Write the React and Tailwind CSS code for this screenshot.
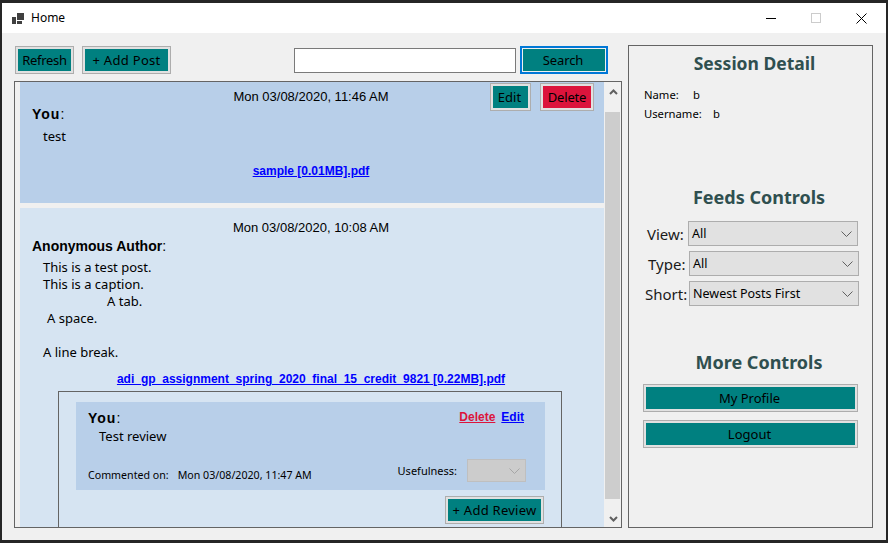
const sans = "font-['Noto_Sans',sans-serif]";
const arial = "font-['Liberation_Sans',Arial,sans-serif]";

function Btn({ children, className = '', fill = 'bg-[#008080]' }) {
  return (
    <button type="button" className={`h-[28px] border border-[#adadad] bg-[#e1e1e1] p-[2px] text-[13px] leading-none text-black ${className}`}>
      <span className={`flex h-full w-full items-center justify-center ${fill}`}>{children}</span>
    </button>
  );
}

function Chevron({ color = '#606060' }) {
  return (
    <svg width="11" height="6" viewBox="0 0 11 6" fill="none" stroke={color} strokeWidth="1">
      <path d="M0.5 0.5L5.5 5.5L10.5 0.5" />
    </svg>
  );
}

function Combo({ label, value, labelClass = '' }) {
  return (
    <div className="flex h-[25px] items-center">
      <span className={`pt-[1px] text-[15px] leading-none text-[#1a1a1a] ${labelClass}`}>{label}</span>
      <div className="flex h-[25px] w-[170px] items-center justify-between border border-[#adadad] bg-[#e1e1e1] pl-[3px] pr-[3px] text-[12.5px]">
        <span className="pt-[2px]">{value}</span>
        <span className="mr-[1px] flex w-[14px] justify-center"><Chevron /></span>
      </div>
    </div>
  );
}

function Heading({ children, className = '' }) {
  return <h2 className={`text-center text-[18px] font-bold leading-[24px] text-[#2f4f4f] ${className}`}>{children}</h2>;
}

function Link({ children, className = '' }) {
  return <a className={`${arial} text-[12px] font-bold leading-[14px] text-[#0000ff] underline ${className}`}>{children}</a>;
}

export default function App() {
  return (
    <div className={`${sans} flex h-[543px] w-[888px] flex-col border-x-2 border-y-[3px] border-[#262626] bg-[#f0f0f0] text-black`}>
      {/* title bar */}
      <header className="flex h-[30px] shrink-0 items-center justify-between bg-white pl-[10px] pr-[19px]">
        <div className="flex items-center gap-[7px]">
          <svg width="12" height="11" viewBox="0 0 12 11" fill="#404040">
            <rect x="0" y="4" width="4" height="7" />
            <rect x="5" y="0" width="7" height="7" />
            <rect x="5" y="8" width="5" height="3" />
          </svg>
          <span className="text-[12px] leading-none">Home</span>
        </div>
        <div className="flex items-center gap-[35px]">
          <svg width="10" height="10" viewBox="0 0 10 10" stroke="#000"><path d="M0 5.5H10" /></svg>
          <svg width="10" height="10" viewBox="0 0 10 10" fill="none" stroke="#cccccc"><rect x="0.5" y="0.5" width="9" height="9" /></svg>
          <svg width="11" height="11" viewBox="0 0 11 11" fill="none" stroke="#000"><path d="M0.5 0.5L10.5 10.5M10.5 0.5L0.5 10.5" /></svg>
        </div>
      </header>

      <div className="flex min-h-0 flex-1 pl-[12px] pr-[13px] pt-[12px]">
        {/* feed column */}
        <main className="flex w-[608px] flex-col">
          <div className="flex h-[36px] shrink-0 items-start pl-[1px]">
            <Btn className="mt-[1px] w-[59px] tracking-[-0.3px]">Refresh</Btn>
            <Btn className="ml-[8px] mt-[1px] w-[89px] tracking-[0.3px]">+ Add Post</Btn>
            <div className="ml-[123px] mt-[3px] h-[25px] w-[222px] border border-[#7a7a7a] bg-white" />
            <button type="button" className="ml-[4px] mt-[1px] h-[28px] w-[88px] border-2 border-[#0078d7] p-[1px] text-[13px] leading-none tracking-[-0.1px]">
              <span className="flex h-full w-full items-center justify-center bg-[#008080] pr-[2px]">Search</span>
            </button>
          </div>

          <div className="flex h-[447px] overflow-hidden border border-[#646464] bg-[#f0f0f0]">
            <div className="flex w-[590px] flex-col gap-[5px] pl-[5px] pr-[1px]">
              {/* first post */}
              <section className="h-[121px] shrink-0 bg-[#b8cfe9] pl-[12px] pr-[10px] pt-[1px]">
                <div className="grid h-[40px] grid-cols-[1fr_auto_1fr]">
                  <b className={`${arial} self-end text-[14px] leading-[17px] tracking-[1px]`}>You<span className="font-normal">:</span></b>
                  <span className={`${arial} -ml-[4px] mt-[6px] text-[13px] leading-[16px]`}>Mon 03/08/2020, 11:46 AM</span>
                  <div className="flex justify-end gap-[9px]">
                    <Btn className="w-[41px]"><span className="mr-[2px]">Edit</span></Btn>
                    <Btn fill="bg-[#dc143c]" className="w-[54px] tracking-[-0.2px]">Delete</Btn>
                  </div>
                </div>
                <p className="mt-[5px] pl-[11px] text-[13px] leading-[17px]">test</p>
                <div className="mt-[17px] pr-[4px] text-center leading-[14px]"><Link>sample [0.01MB].pdf</Link></div>
              </section>

              {/* second post */}
              <section className="flex-1 bg-[#d6e4f2] pl-[12px] pt-[12px]">
                <div className={`${arial} pr-[14px] text-center text-[13px] leading-[16px]`}>Mon 03/08/2020, 10:08 AM</div>
                <b className={`${arial} mt-[2px] block text-[14px] leading-[17px]`}>Anonymous Author<span className="font-normal">:</span></b>
                <div className="mt-[4px] pl-[11px] text-[13px] leading-[17px]">
                  <p>This is a test post.</p>
                  <p>This is a caption.</p>
                  <p className="pl-[64px]">A tab.</p>
                  <p className="pl-[4px]">A space.</p>
                  <p className="h-[17px]" />
                  <p>A line break.</p>
                </div>
                <div className="mt-[9px] pr-[14px] text-center leading-[14px]"><Link>adi_gp_assignment_spring_2020_final_15_credit_9821 [0.22MB].pdf</Link></div>

                {/* review box */}
                <div className="ml-[26px] mt-[5px] h-[200px] w-[504px] border border-[#646464] pl-[17px] pr-[16px] pt-[10px]">
                  <div className="h-[88px] bg-[#b8cfe9] pl-[12px] pr-[21px]">
                    <div className="flex h-[42px] items-start justify-between">
                      <div>
                        <b className={`${arial} mt-[8px] block text-[14px] leading-[17px] tracking-[1px]`}>You<span className="font-normal">:</span></b>
                        <p className="mt-[1px] pl-[11px] text-[13px] leading-[17px]">Test review</p>
                      </div>
                      <div className="mt-[8px] flex gap-[6px]">
                        <Link className="!leading-[15px] !text-[#dc143c]">Delete</Link>
                        <Link className="!leading-[15px]">Edit</Link>
                      </div>
                    </div>
                    <div className="flex items-start justify-between">
                      <p className="mt-[23px] text-[10.65px] leading-[16px]">Commented on:<span className="ml-[9px]">Mon 03/08/2020, 11:47 AM</span></p>
                      <div className="-mr-[2px] mt-[15px] flex items-center gap-[10px]">
                        <span className="text-[11px] leading-none">Usefulness:</span>
                        <div className="flex h-[23px] w-[59px] items-center justify-end border border-[#bfbfbf] bg-[#cccccc] pr-[5px]">
                          <Chevron color="#a6a6a6" />
                        </div>
                      </div>
                    </div>
                  </div>
                  <div className="mt-[6px] flex justify-end">
                    <Btn className="-mr-[-1px] w-[99px] tracking-[0.25px]">+ Add Review</Btn>
                  </div>
                </div>
              </section>
            </div>

            {/* scroll bar */}
            <div className="flex w-[16px] shrink-0 flex-col bg-[#f0f0f0]">
              <div className="flex h-[30px] shrink-0 justify-center pt-[7px]">
                <svg width="9" height="6" viewBox="0 0 9 6" fill="none" stroke="#606060" strokeWidth="2"><path d="M1 5L4.5 1.5L8 5" /></svg>
              </div>
              <div className="h-[387px] w-[15px] bg-[#cdcdcd]" />
              <div className="flex flex-1 items-end justify-center pb-[5px]">
                <svg width="9" height="6" viewBox="0 0 9 6" fill="none" stroke="#606060" strokeWidth="2"><path d="M1 1L4.5 4.5L8 1" /></svg>
              </div>
            </div>
          </div>
        </main>

        {/* side panel */}
        <aside className="ml-[6px] h-[483px] w-[245px] border border-[#646464] pt-[5px]">
          <Heading className="pl-[8px] !text-[17.5px]">Session Detail</Heading>
          <div className="mt-[12px] pl-[15px] text-[11.25px] leading-[16px]">
            <p className="flex"><span className="w-[49px]">Name:</span>b</p>
            <p className="mt-[3px] flex"><span className="w-[69px]">Username:</span>b</p>
          </div>

          <Heading className="mt-[63px] pl-[17px]">Feeds Controls</Heading>
          <div className="mt-[12px] flex flex-col gap-[5px] pl-[15px]">
            <Combo label="View:" labelClass="ml-[3px] w-[41px]" value="All" />
            <div className="pl-[1px]"><Combo label="Type:" labelClass="ml-[3px] w-[41px]" value="All" /></div>
            <div className="pl-[1px]"><Combo label="Short:" labelClass="w-[44px]" value="Newest Posts First" /></div>
          </div>

          <Heading className="mt-[44px] pl-[17px]">More Controls</Heading>
          <div className="mt-[10px] flex flex-col gap-[8px] pl-[14px]">
            <Btn className="w-[215px]"><span className="mr-[2px]">My Profile</span></Btn>
            <Btn className="w-[215px]"><span className="mr-[2px]">Logout</span></Btn>
          </div>
        </aside>
      </div>
    </div>
  );
}
